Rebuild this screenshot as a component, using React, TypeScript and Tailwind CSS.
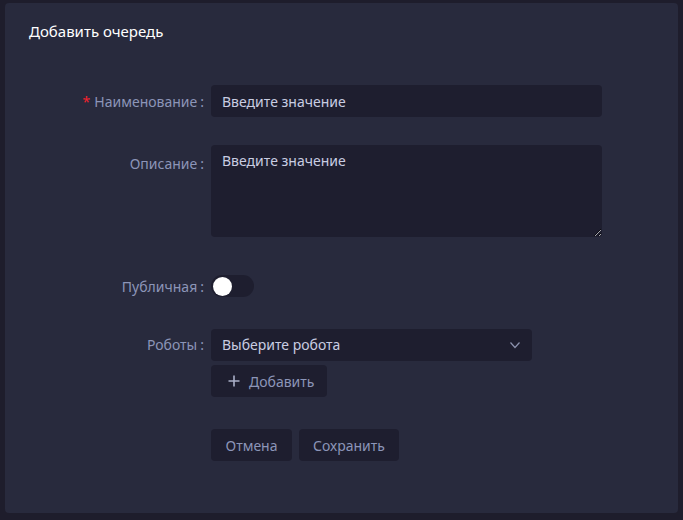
import React, { useState } from "react";

function Label({ text, required, className = "" }: { text: string; required?: boolean; className?: string }) {
  return (
    <label className={`w-[199px] text-right text-[14px] text-[#8c95b8] ${className}`}>
      {required && <span className="mr-[4px] text-[#f5222d]">*</span>}
      {text}
      <span className="ml-[3px]">:</span>
    </label>
  );
}

export default function App() {
  const [isPublic, setIsPublic] = useState(false);

  return (
    <div
      className="min-h-screen w-full bg-[#1e1d2c] pt-[3px] pb-[7px] pl-[5px] pr-[5px]"
      style={{ fontFamily: '"Noto Sans", "Open Sans", sans-serif' }}
    >
      <div className="h-[510px] rounded-[4px] bg-[#282a3d]">
        <h1 className="pl-[24px] pt-[17px] text-[15px] leading-[22px] text-white">Добавить очередь</h1>

        <div className="mt-[43px] flex flex-col">
          {/* Наименование */}
          <div className="flex items-center">
            <Label text="Наименование" required />
            <input
              className="ml-[7px] h-[32px] w-[391px] rounded-[4px] bg-[#1e1e2f] px-[11px] text-[14px] text-[#c9cde2] outline-none placeholder:text-[#c9cde2]"
              placeholder="Введите значение"
            />
          </div>

          {/* Описание */}
          <div className="mt-[28px] flex items-start">
            <Label text="Описание" className="pt-[8px]" />
            <textarea
              className="ml-[7px] h-[92px] w-[391px] rounded-[4px] bg-[#1e1e2f] px-[11px] py-[5px] text-[14px] text-[#c9cde2] outline-none placeholder:text-[#c9cde2]"
              placeholder="Введите значение"
            />
          </div>

          {/* Публичная */}
          <div className="mt-[33px] flex h-[32px] items-center">
            <Label text="Публичная" />
            <button
              onClick={() => setIsPublic(!isPublic)}
              className={`ml-[7px] flex h-[22px] w-[43px] items-center rounded-full px-[2px] ${isPublic ? "justify-end bg-[#3d63dd]" : "justify-start bg-[#1e1e2f]"}`}
            >
              <span className="h-[19px] w-[19px] rounded-full bg-white" />
            </button>
          </div>

          {/* Роботы */}
          <div className="mt-[27px] flex items-start">
            <Label text="Роботы" className="pt-[5px]" />
            <div className="ml-[7px] flex flex-col gap-[4px]">
              <div className="flex h-[32px] w-[321px] items-center justify-between rounded-[4px] bg-[#1e1e2f] pb-[2px] pl-[11px] pr-[11px]">
                <span className="text-[14px] text-[#c9cde2]">Выберите робота</span>
                <svg width="12" height="12" viewBox="0 0 12 12" fill="none" className="mt-[2px]">
                  <path d="M1.5 3.5 L6 8.5 L10.5 3.5" stroke="#8c92ad" strokeWidth="1.2" />
                </svg>
              </div>
              <button className="flex h-[32px] w-[116px] items-center gap-[9px] rounded-[4px] bg-[#1e1e2f] pl-[17px] text-[14px] text-[#8c95b8]">
                <svg width="12" height="12" viewBox="0 0 12 12" fill="none">
                  <path d="M6 0.5 V11.5 M0.5 6 H11.5" stroke="#aab0c8" strokeWidth="1.6" />
                </svg>
                Добавить
              </button>
            </div>
          </div>

          {/* Кнопки */}
          <div className="mt-[32px] flex gap-[7px] pl-[206px]">
            <button className="h-[32px] w-[81px] rounded-[4px] bg-[#1e1e2f] text-[14px] text-[#8c95b8]">Отмена</button>
            <button className="h-[32px] w-[100px] rounded-[4px] bg-[#1e1e2f] text-[14px] text-[#8c95b8]">Сохранить</button>
          </div>
        </div>
      </div>
    </div>
  );
}
